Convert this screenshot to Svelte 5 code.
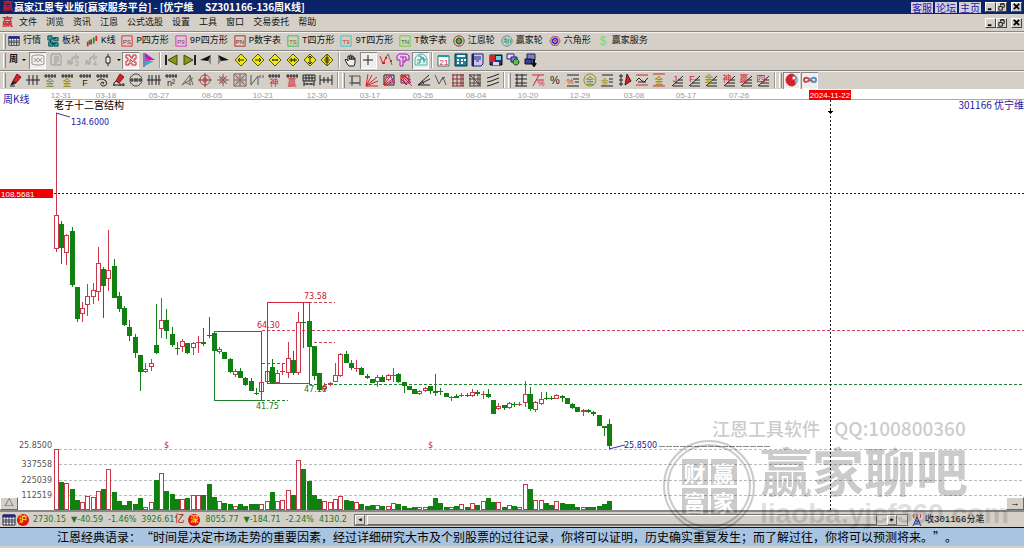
<script>
  const menus = ['文件', '浏览', '资讯', '江恩', '公式选股', '设置', '工具', '窗口', '交易委托', '帮助'];

  // icon shapes: [path, stroke, fill, width] or { t, x, y, s, c } for a letter
  const K = '#222';
  const R = '#d8202a';
  const G = '#999';
  const O = '#8a8a10';
  const ticks = ['M1 3H13M3 1V5M6 1V5M9 1V5M12 1V5', K];
  const fan = ['M2 13L13 3M3 13H13M5 10H13M8 7H13', K];
  const glyph = (t, c, x = 7, y = 13, s = 9) => ({ t, c, x, y, s });
  const ray = 'M1 13L3 1M1 13L7 2M1 13L12 4M1 13L13 8M1 13H13';
  const frame = (c) => ['M1 1H13V13H1Z', c];
  const diamond = ['M7 1L13 7L7 13L1 7Z', '#55551a', '#f0e810'];
  const grid = 'M2 1V13M6 1V13M10 1V13M1 2H13M1 6H13M1 10H13M12 1V13M1 13H13';
  const pen = ['M4 8L8 1L12 4L7 10Z', '#801010', R];
  const nib = ['M4 8L2 12L7 10M1 13H6', K, K];

  const modules = [
    { name: '行情', icon: [['M1 2H13V12H1Z', '#223', '#fff'], ['M1 2H13V4H1Z', '#22288a', '#22288a'], ['M1 7H13M1 9H13M4 4V12M7 4V12M10 4V12', '#334']] },
    { name: '板块', icon: [['M1 1H6V6H1ZM8 3H13V7H8ZM2 8H7V13H2ZM8 9H13V13H8Z', '#064848', '#20a8a8'], ['M6 4H10M5 10H10M4 5V9', K]] },
    { name: 'K线', icon: [['M2 8V13M6 5V11M12 1V7', R, 'none', 2], ['M4 6V11M9 3V10', '#109020', 'none', 2]] },
    { name: 'P四方形', icon: [frame(R), glyph('PS', '#a02020', 7, 10, 7)] },
    { name: '9P四方形', icon: [frame('#e020c0'), glyph('P9', '#a010a0', 7, 10, 7)] },
    { name: 'P数字表', icon: [frame('#a02020'), glyph('PN', '#701010', 7, 10, 7)] },
    { name: 'T四方形', icon: [frame('#20c040'), glyph('TS', '#a05010', 7, 10, 7)] },
    { name: '9T四方形', icon: [frame('#20c8c8'), glyph('T9', R, 7, 10, 7)] },
    { name: 'T数字表', icon: [frame('#60d020'), glyph('TN', '#107030', 7, 10, 7)] },
    { name: '江恩轮', icon: [['M7 1A6 6 0 1 1 6.9 1Z', '#701818'], ['M7 4A3 3 0 1 1 6.9 4Z', '#107010', 'none', 2], ['M7 6A1 1 0 1 1 6.9 6Z', R]] },
    { name: '赢家轮', icon: [['M7 1A6 6 0 1 1 6.9 1Z', '#4080a0'], ['M3 5H7V11M5 3V9M9 4V10M11 5V9M3 8H7', '#20a080']] },
    { name: '六角形', icon: [['M4 2H10L13 7L10 12H4L1 7Z', '#c03040'], ['M7 4A3 3 0 1 1 6.9 4Z', '#3030e0', 'none', 2], ['M7 6A1 1 0 1 1 6.9 6Z', R]] },
    { name: '赢家服务', icon: [glyph('$', '#78d878', 7, 12, 14)] }
  ];

  const viewTools = [
    { name: '网格', on: true, icon: [['M1 3L5 2H9L13 3V11L9 12H5L1 11ZM3 5L7 9L11 5M3 9L7 5L11 9', G]] },
    { name: '列表', icon: [['M3 1H11L12 3V12H4L2 11V3ZM5 4H10M5 6H10M5 8H10M5 10H8', G]] },
    { name: '分时二', icon: [['M1 12V8H3V11H5V5H7V3', G], ['M9 7V1M11 6V3', G], glyph('2', G, 10, 13, 7)] },
    { name: '分时四', icon: [['M1 12V8H3V11H5V5H7V3', G], ['M9 7V1M11 6V3', G], glyph('4', G, 10, 13, 7)] },
    { name: '蜡烛', drop: true, icon: [['M7 1V13', K], ['M5 4H9V10H5Z', K, '#eee']] },
    { name: '迷宫', on: true, icon: [['M2 2H6V4H9V2H12V6H10V9H12V12H8V10H5V12H2V8H4V5H2ZM6 6L9 9M5 8H7M9 5H7', R]] },
    { name: '旗', icon: [['M3 0L13 7H3Z', 'none', '#b020c0'], ['M3 4L9 8H3Z', 'none', '#f030b0'], ['M3 8H12L3 13Z', 'none', '#20b8c8'], ['M2 0V14', '#2030a0']] }
  ];

  const moveTools = [
    { name: '首根', icon: [['M1 2V12', K, 'none', 2], ['M12 2V12L3 7Z', '#444810', '#8a9818']] },
    { name: '末根', icon: [['M13 2V12', K, 'none', 2], ['M2 2V12L11 7Z', '#444810', '#8a9818']] },
    { name: '左移', icon: [['M12 2V12L9 8Z', 'none', '#888'], ['M1 7L12 2L9 8Z', 'none', '#111']] },
    { name: '右移', icon: [['M2 2V12L5 8Z', 'none', '#888'], ['M13 7L2 2L5 8Z', 'none', '#111']] },
    { name: '向左', icon: [diamond, ['M4 7H10M6 5L4 7L6 9', K]] },
    { name: '向右', icon: [diamond, ['M4 7H10M8 5L10 7L8 9', K]] },
    { name: '横向放大', icon: [diamond, ['M4 7H10M5 6V8M9 6V8', K]] },
    { name: '横向缩小', icon: [diamond, ['M3 7H11M5 5L6 7L5 9M9 5L8 7L9 9', K]] },
    { name: '纵向放大', icon: [diamond, ['M7 3V11M5 5L7 3L9 5M5 9L7 11L9 9', K]] },
    { name: '纵向缩小', icon: [diamond, ['M7 2V12M4 7H10M5 5H9M5 9H9', K]] }
  ];

  const cursorTools = [
    { name: '拖动', icon: [['M4 12L1 7L2 6L4 8V3H5L6 7V2H7L8 7V3H9L10 7V5H11V10L10 13H5Z', K, '#eee']] },
    { name: '十字', on: true, icon: [['M7 2V12M2 7H12', K]] },
    { name: '波浪', icon: [['M1 3L4 11L7 4', R], ['M7 4L9 1L13 12', '#806060'], ['M3 10H6M6 5H8M11 8H13', R, 'none', 2]] },
    { name: '形态', icon: [['M3 1H11L13 3V7H9V9H7V13H4V7H1V3Z', '#a020b0', '#ecc8ee'], ['M4 4H10M7 4V9M10 4V7', '#a020b0']] },
    { name: '江恩圆', on: true, icon: [['M4 3H7V7H3M7 5H10V10M3 10H6V7M9 4V7H12', '#20a098'], ['M7 1A6 6 0 0 1 13 7V12H1V7A6 6 0 0 1 7 1Z', '#40b8b0']] }
  ];

  const systemTools = [
    { name: '日历', icon: [['M1 3H12V13H1Z', '#208080', '#fff'], ['M1 3H12', '#20a0a0', 'none', 2], glyph('21', R, 7, 12, 8)] },
    { name: '计算器', icon: [['M1 1H13V13H1Z', '#003848', '#208098'], ['M3 3H11', '#d8ffff', 'none', 2], ['M3 7H5M7 7H9M3 10H5M7 10H9M10 7H12', '#fff', 'none', 2]] },
    { name: '笔记', icon: [['M1 1H12V11L10 13H1Z', '#202070', '#c8c8f0'], ['M3 4H10M3 6H10M5 8H8', '#202070'], ['M2 1V13', '#202070', 'none', 2]] },
    { name: '保存', icon: [['M1 2H13V12H1Z', '#111', '#1830a0'], ['M1 2H6V9H1Z', 'none', R], ['M7 3H12V7H7Z', 'none', '#60d8d8'], ['M4 9H10V12H4Z', 'none', '#ddd']] },
    { name: '联网', icon: [['M1 1H8V6H1Z', '#202070', '#e0e0ff'], ['M5 4H11V9H5Z', '#202070', '#8080d0'], ['M10 6A3 3 0 1 1 9.9 6Z', '#104010', '#60c040']] },
    { name: '传送', icon: [['M4 1H12V7H4Z', '#202050', '#8080c0'], ['M2 6H9V11H2Z', '#111', '#3040a0'], ['M11 6V13M9 10L11 13L13 10', '#111', 'none', 2]] }
  ];

  const lineTools = [
    { name: '画笔', icon: [pen, nib] },
    { name: '周期线', icon: [['M0 7H14M3 2V12M7 2V12M11 2V12', K]] },
    { name: '金周期', icon: [ticks, glyph('金', O)] },
    { name: '金分割', icon: [ticks, glyph('金', O)] },
    { name: '费氏', icon: [ticks, glyph('F', K)] },
    { name: '螺旋', icon: [ticks, ['M2 8Q6 4 11 8Q13 13 8 13Q4 12 7 9Q10 9 8 11', K]] },
    { name: '时间笔', icon: [pen, ['M4 8L2 10M1 12H13M2 10V13M8 10V13M11 10V13', K]] },
    { name: '圆周', icon: [['M7 1A6 6 0 1 1 6.9 1Z', '#444'], ['M1 7H13M3 5V9M6 5V9M8 5V9M11 5V9', K]] },
    { name: '等分', icon: [['M0 7H14M2 2V12M5 2V12M9 2V12M12 2V12', K]] },
    { name: '平方', icon: [ticks, glyph('n²', K)] },
    { name: '角度', icon: [['M1 12L9 2L12 12M1 12L12 5M9 2V12M4 9L10 12', '#666']] },
    { name: '太极', icon: [['M7 2A5 5 0 1 1 6.9 2Z', R], ['M0 7H14M7 0V14', '#555'], ['M7 5A2 2 0 1 1 6.9 5Z', R]] },
    { name: '放射', icon: [['M7 1V13M1 7H13M3 3L11 11M11 3L3 11', '#a05050'], ['M7 4A3 3 0 1 1 6.9 4Z', '#777']] },
    { name: '网状', icon: [['M1 1H13V13H1ZM1 1L13 13M13 1L1 13M7 1V13M1 7H13', '#886060'], ['M4 4H10V10H4Z', '#888']] },
    { name: '波段', icon: [['M1 2V12M1 12L8 3V12M10 2V5M13 2V5', '#555']] },
    { name: '神线', icon: [ticks, glyph('神', R)] },
    { name: '赢线', icon: [ticks, glyph('赢', R)] },
    { name: '日网', icon: [['M1 2H13V8H1ZM4 2V8M7 2V8M10 2V8M1 5H13M2 8V13M12 8V13M2 11H12M5 10V12M9 10V12', K]] },
    { name: '区间', icon: [['M1 2V12M13 2V12M1 7H13M5 4V10M9 4V10', K]] }
  ];

  const fanTools = [
    { name: '方框', icon: [['M4 3H12V10H4ZM1 3H4M1 10H12M4 3V13M12 10V13', '#555']] },
    { name: '扇形', icon: [[ray, R]] },
    { name: '方扇', icon: [['M2 2H12V12H2Z', K], ['M2 12L5 1M2 12L9 2M2 12L12 5M2 12L13 9', R], ['M4 5L9 3L11 8L7 10', '#8020b0']] },
    { name: '内方扇', icon: [['M2 2H10V10H2Z', '#802020', '#e0b0b0'], ['M2 2L13 13M2 2L12 7M2 2L7 12', R], ['M5 2L12 10M2 6L8 12', '#602080']] },
    { name: '角度扇', icon: [['M1 12L12 2M1 12L13 6M1 12L13 12M5 8L7 11', K]] },
    { name: '折线', icon: [['M1 2L5 11L9 4L12 12M7 7L11 4', '#555']] },
    { name: '红格', icon: [[grid, '#803030']] },
    { name: '黑格', icon: [[grid, '#504040'], ['M2 2L12 12', '#803030']] },
    { name: '平行线', icon: [['M1 5L5 4L13 1M1 9L5 8L13 5M1 13L5 12L13 9', K]] }
  ];

  const ratioTools = [
    { name: '阶梯', icon: [['M3 1V13M1 2H13M1 6H13M1 10H13M8 1V13M1 13H13', K]] },
    { name: '七分比', icon: [['M1 2H13M2 13L8 2M5 7H13', R], glyph('%', R, 10, 13, 8)] },
    { name: '百分比', icon: [glyph('%', K, 7, 11, 11)] },
    { name: '百分线', icon: [['M1 2H13M7 6H13M9 9H13M1 13H13', K], glyph('%', R, 4, 11, 8)] },
    { name: '金圆', icon: [['M7 1A6 6 0 1 1 6.9 1Z', O], glyph('金', O, 7, 11)] },
    { name: '金线', icon: [['M2 2H13M9 6H13M9 9H13M1 13H13', K], glyph('金', O, 5, 12, 8)] },
    { name: '价位笔', icon: [['M3 1V13M1 3H5M1 7H5M1 11H5', K], ['M7 12L9 1L13 8Z', '#601010', R]] },
    { name: '波动线', icon: [['M1 2H13M1 12H13', R], ['M1 8L4 5L7 8L9 9L13 5M3 9H11', K]] },
    { name: '金红线', icon: [['M1 1H13M1 13H13', R], glyph('金', O, 7, 11)] },
    ...[['J', R], ['F', R], ['金', O], ['神', R], ['赢', R], ['四', R]].map(([t, c]) => ({
      name: t + '线',
      icon: [fan, glyph(t, c, 5, 9, 9)]
    }))
  ];

  const taoTools = [
    { name: '太极图', on: true, icon: [['M7 1A6 6 0 1 1 6.9 1Z', 'none', '#80b8e8'], ['M7 1A6 6 0 0 0 7 13A3 3 0 0 0 7 7A3 3 0 0 1 9 2Z', R, R], ['M9 3A2 2 0 1 1 8.9 3Z', R, '#fff']] },
    { name: '无穷', on: true, icon: [['M7 7C5 4 1 4 1 7C1 10 4 9 7 7L10 9', '#c04858', 'none', 2], ['M7 7C9 4 13 4 13 7C13 10 10 9 9 8', '#5090d0', 'none', 2]] }
  ];

  const dates = [
    ['12-31', 61], ['03-18', 106], ['05-27', 159], ['08-05', 212], ['10-21', 263],
    ['12-30', 317], ['03-17', 370], ['05-26', 423], ['08-04', 476], ['10-20', 528],
    ['12-29', 580], ['03-08', 634], ['05-17', 686], ['07-26', 739]
  ];

  // up?, body top, body bottom, high, low, volume top
  const bars = [
    [1, 215, 249, 113, 252, 449], [0, 224, 248, 221, 264, 482], [1, 235, 253, 234, 265, 483], [0, 231, 285, 227, 287, 489],
    [0, 287, 319, 287, 322, 500], [1, 308, 314, 302, 322, 502], [1, 296, 305, 284, 316, 496], [1, 290, 297, 283, 304, 497],
    [1, 263, 292, 247, 301, 491], [0, 269, 286, 267, 318, 489], [1, 270, 279, 230, 291, 469], [0, 266, 298, 259, 298, 492],
    [0, 296, 309, 292, 312, 501], [0, 308, 325, 306, 326, 505], [0, 327, 336, 320, 341, 501], [0, 337, 353, 334, 358, 504],
    [0, 355, 372, 355, 391, 498], [1, 369, 372, 363, 373, 507], [1, 363, 367, 359, 371, 502], [0, 345, 353, 304, 354, 480],
    [1, 320, 329, 298, 338, 473], [0, 320, 331, 309, 339, 491], [0, 334, 345, 327, 347, 494], [0, 348, 349, 342, 355, 499],
    [1, 341, 347, 339, 352, 499], [0, 343, 353, 343, 354, 498], [1, 343, 348, 342, 355, 495], [1, 342, 343, 336, 353, 495],
    [0, 342, 344, 328, 346, 495], [0, 335, 336, 317, 338, 484], [0, 333, 351, 331, 351, 497], [1, 349, 352, 347, 354, 501],
    [0, 352, 359, 352, 359, 503], [0, 359, 372, 358, 373, 504], [1, 371, 375, 369, 377, 506], [0, 371, 378, 368, 378, 504],
    [0, 378, 385, 377, 386, 506], [0, 381, 391, 378, 391, 504], [0, 393, 394, 388, 395, 504], [1, 382, 392, 382, 400, 504],
    [1, 371, 382, 371, 382, 501], [0, 367, 383, 359, 383, 492], [1, 373, 383, 370, 383, 501], [1, 371, 372, 363, 375, 500],
    [1, 358, 373, 342, 378, 490], [0, 360, 373, 351, 375, 495], [1, 322, 373, 312, 375, 460], [0, 322, 323, 302, 348, 469],
    [0, 321, 347, 320, 347, 481], [0, 346, 376, 346, 380, 495], [0, 373, 390, 373, 391, 499], [1, 386, 389, 383, 391, 501],
    [1, 383, 385, 382, 386, 502], [1, 375, 382, 363, 382, 499], [1, 354, 376, 353, 377, 496], [0, 354, 363, 351, 363, 500],
    [0, 363, 368, 360, 370, 501], [1, 368, 369, 360, 372, 502], [0, 368, 375, 367, 375, 504], [0, 376, 378, 374, 379, 506],
    [0, 379, 383, 379, 383, 505], [1, 377, 382, 375, 387, 505], [0, 377, 382, 375, 382, 506], [1, 375, 380, 374, 381, 506],
    [1, 375, 376, 368, 382, 503], [0, 374, 382, 373, 383, 504], [0, 382, 386, 382, 393, 506], [0, 386, 390, 386, 390, 508],
    [0, 389, 394, 389, 394, 507], [1, 391, 394, 390, 395, 507], [1, 388, 391, 387, 392, 507], [0, 386, 391, 386, 394, 506],
    [0, 391, 393, 374, 396, 498], [0, 391, 392, 388, 395, 503], [0, 393, 397, 393, 397, 507], [1, 397, 398, 396, 401, 507],
    [0, 396, 398, 394, 398, 506], [1, 395, 396, 393, 397, 504], [0, 395, 396, 393, 397, 507], [1, 392, 396, 389, 397, 503],
    [0, 392, 394, 390, 396, 505], [1, 394, 395, 391, 399, 501], [0, 394, 397, 389, 398, 498], [0, 400, 414, 400, 414, 502],
    [1, 406, 409, 403, 410, 502], [0, 405, 408, 405, 410, 507], [1, 403, 408, 402, 409, 505], [0, 404, 405, 402, 407, 506],
    [1, 404, 405, 402, 406, 507], [1, 394, 403, 381, 407, 484], [0, 394, 409, 387, 411, 489], [1, 402, 410, 401, 412, 500],
    [1, 399, 404, 392, 405, 500], [0, 398, 399, 392, 400, 503], [0, 398, 399, 396, 400, 505], [1, 395, 399, 394, 399, 501],
    [0, 396, 398, 395, 402, 503], [0, 398, 404, 398, 404, 504], [0, 404, 408, 403, 409, 504], [0, 407, 412, 407, 412, 507],
    [1, 410, 412, 409, 416, 507], [0, 410, 412, 409, 413, 507], [0, 412, 414, 411, 416, 507], [0, 415, 426, 415, 426, 506],
    [0, 426, 428, 426, 436, 504], [0, 424, 446, 419, 449, 501]
  ].map(([up, top, bottom, high, low, volume], i) => ({
    up, top, bottom, high, low, volume,
    x: Math.round(55.7 + i * 5.27)
  }));
</script>

{#snippet art(shapes)}
  <svg class="icon" viewBox="0 0 14 14" aria-hidden="true">
    {#each shapes as s}
      {#if s.t}
        <text x={s.x} y={s.y} font-size={s.s} fill={s.c} text-anchor="middle">{s.t}</text>
      {:else}
        <path d={s[0]} stroke={s[1]} fill={s[2] ?? 'none'} stroke-width={s[3] ?? 1} />
      {/if}
    {/each}
  </svg>
{/snippet}

{#snippet tools(list)}
  {#each list as tool}
    <button class="tool" class:on={tool.on} aria-label={tool.name}>
      {@render art(tool.icon)}
      {#if tool.drop}<i class="drop"></i>{/if}
    </button>
  {/each}
{/snippet}

{#snippet windowButtons()}
  <div class="window-buttons">
    <button aria-label="最小化"><svg viewBox="0 0 10 9"><path d="M2 7H6" stroke-width="2" /></svg></button>
    <button aria-label="还原"><svg viewBox="0 0 10 9"><path d="M4 3V1H8V5H7M2 4H6V8H2ZM4 1H8" /></svg></button>
    <button class="close" aria-label="关闭"><svg viewBox="0 0 10 9"><path d="M2 1L8 7M8 1L2 7" stroke-width="2" /></svg></button>
  </div>
{/snippet}

<div class="app">
  <header class="title">
    <span class="logo">赢</span>
    <h1>赢家江恩专业版[赢家服务平台] - [优宁维&nbsp;&nbsp;&nbsp;&nbsp;&nbsp;SZ301166-136周K线]</h1>
    <nav class="links">
      <a href="#service">客服</a>
      <a href="#forum">论坛</a>
      <a href="#home">主页</a>
    </nav>
    {@render windowButtons()}
  </header>

  <nav class="menu">
    <span class="logo">赢</span>
    {#each menus as name}
      <button>{name}</button>
    {/each}
    {@render windowButtons()}
  </nav>

  <div class="bar modules">
    <i class="grip"></i>
    {#each modules as m}
      <button class="module">{@render art(m.icon)}{m.name}</button>
    {/each}
  </div>

  <div class="bar tall">
    <i class="grip"></i>
    <button class="period">周<i class="drop"></i></button>
    <div class="group view">{@render tools(viewTools)}</div>
    <i class="sep"></i>
    <div class="group move">{@render tools(moveTools)}</div>
    <i class="sep"></i>
    <div class="group cursor">{@render tools(cursorTools)}</div>
    <i class="sep"></i>
    <div class="group system">{@render tools(systemTools)}</div>
  </div>

  <div class="bar">
    <i class="grip"></i>
    <div class="group line">{@render tools(lineTools)}</div>
    <i class="sep"></i><i class="grip"></i>
    <div class="group fans">{@render tools(fanTools)}</div>
    <i class="sep"></i><i class="grip"></i>
    <div class="group ratio">{@render tools(ratioTools)}</div>
    <i class="sep"></i><i class="grip"></i>
    <div class="group tao">{@render tools(taoTools)}</div>
  </div>

  <main class="chart">
    <svg class="plot">
      <g transform="translate(0 -89)" shape-rendering="crispEdges">
        <line x1="54" x2="100%" y1="99.5" y2="99.5" stroke="#aaa" />
        {#each [449, 464, 480, 495] as y}
          <line x1="54" x2="100%" y1={y + 0.5} y2={y + 0.5} class="dash" stroke="#bbb" />
        {/each}
        <line x1="262" x2="100%" y1="330.5" y2="330.5" class="dash" stroke="#d04058" />
        <line x1="309" x2="100%" y1="384.5" y2="384.5" class="dash" stroke="#208030" />
        <path d="M309 302.5H335M309 342.5H335" class="dash" stroke="#d04058" />
        <path d="M262 363.5H286M262 400.5H288" class="dash" stroke="#208030" />
        <path d="M659 446.5H770" stroke="#888" stroke-dasharray="6 1" />

        {#each bars as b}
          <g class={b.up ? 'up' : 'down'}>
            {#if b.high < b.top}<line x1={b.x + 0.5} x2={b.x + 0.5} y1={b.high} y2={b.top} />{/if}
            {#if b.low > b.bottom}<line x1={b.x + 0.5} x2={b.x + 0.5} y1={b.bottom} y2={b.low} />{/if}
            {#if b.bottom - b.top < 2}
              <line x1={b.x - 2} x2={b.x + 3} y1={b.top + 0.5} y2={b.top + 0.5} />
            {:else}
              <rect x={b.x - 1.5} y={b.top + 0.5} width="4" height={b.bottom - b.top - 1} />
            {/if}
            <rect x={b.x - 1.5} y={b.volume + 0.5} width="4" height={509 - b.volume} />
          </g>
        {/each}

        <rect x="214.5" y="331.5" width="47" height="69" fill="none" stroke="#208030" />
        <rect x="267.5" y="302.5" width="42" height="81" fill="none" stroke="#d02838" />

        <line x1="54" x2="100%" y1="193.5" y2="193.5" class="cross" />
        <line x1="830.5" x2="830.5" y1="100" y2="510" class="cross" />
        <path d="M828 111.5H833M829 112.5H832M830.5 109V114" stroke="#000" />
        <rect x="0" y="189" width="53" height="9" fill="#f00000" />
        <rect x="809" y="90" width="42" height="10" fill="#f00000" />
      </g>
      <g transform="translate(0 -89)">
        <path d="M56 113L70 117M609 449L625 445" stroke="#3038a0" fill="none" />
        <g class="date">
          {#each dates as [label, x]}
            <text {x} y="98" text-anchor="middle">{label}</text>
          {/each}
        </g>
        <text x="830" y="98" class="mark" text-anchor="middle">2024-11-22</text>
        <text x="1" y="197" class="mark">108.5681</text>
        <text x="3" y="103" class="cn blue">周K线</text>
        <text x="54" y="109" class="cn">老子十二宫结构</text>
        <text x="100%" y="109" class="cn blue" text-anchor="end">301166 优宁维</text>
        <g class="num">
          <text x="71" y="125" class="blue">134.6000</text>
          <text x="624" y="448" class="blue">25.8500</text>
          <text x="304" y="299" class="red">73.58</text>
          <text x="257" y="328" class="red">64.30</text>
          <text x="256" y="409" class="green">41.75</text>
          <text x="304" y="392" class="green">47.18</text>
          <text x="164" y="448" class="red">$</text>
          <text x="428" y="448" class="red">$</text>
          <g class="scale" text-anchor="end">
            <text x="52" y="448">25.8500</text>
            <text x="52" y="467">337558</text>
            <text x="52" y="483">225039</text>
            <text x="52" y="498">112519</text>
          </g>
        </g>
      </g>
    </svg>
    <button class="corner left" aria-label="展开">△</button>
    <button class="corner right" aria-label="向右">→</button>
  </main>

  <footer class="status">
    <div class="market">
      {@render art(modules[0].icon)}
      <b class="badge">沪</b>
      <span>2730.15</span><span>▼-40.59</span><span>-1.46%</span><span>3926.61<em>亿</em></span>
      <b class="badge">深</b>
      <span>8055.77</span><span>▼-184.71</span><span>-2.24%</span><span>4130.2</span>
    </div>
    <div class="scroll">
      <button aria-label="向左滚动">◂</button>
      <div class="thumb"></div>
      <button aria-label="向右滚动">▸</button>
    </div>
    <div class="feed">
      <svg class="icon" viewBox="0 0 14 14" aria-hidden="true">
        <path d="M3 13L7 4L11 13M4 11H10M5 8H9M5 11L9 8" stroke="#2838a0" fill="none" />
        <path d="M4 1Q2 3 4 5M10 1Q12 3 10 5M7 1V5" stroke={R} fill="none" />
      </svg>
      收301166分笔
    </div>
  </footer>

  <p class="quote">江恩经典语录：“时间是决定市场走势的重要因素，经过详细研究大市及个别股票的过往记录，你将可以证明，历史确实重复发生；而了解过往，你将可以预测将来。”。</p>

  <div class="watermark" aria-hidden="true">
    <div class="contact">江恩工具软件 <span>QQ:100800360</span></div>
    <div class="brand">
      <div class="seal"><span>财</span><span>赢</span><span>富</span><span>家</span></div>
      <div>
        <div class="name">赢家聊吧</div>
        <div class="site">liaoba.yjcf360.com</div>
      </div>
    </div>
  </div>
</div>

<style>
  :global(body) {
    background: #d4d0c8;
  }
  .app {
    position: relative;
    overflow: hidden;
    font: 9px/12px "Liberation Mono", "Noto Sans CJK SC", monospace;
    color: #111;
    background: #d4d0c8;
  }
  button {
    margin: 0;
    padding: 0;
    border: 0;
    background: none;
    font: inherit;
    color: inherit;
    white-space: nowrap;
  }
  .icon {
    flex: none;
    width: 14px;
    height: 14px;
    font-family: "Liberation Sans", "Noto Sans CJK SC", sans-serif;
  }

  /* title and menu */
  .title {
    display: flex;
    align-items: center;
    height: 14px;
    padding: 0 2px;
    background: #0a246a;
    color: #fff;
  }
  .logo {
    width: 12px;
    font-size: 11px;
    font-weight: bold;
    color: #d01828;
  }
  h1 {
    flex: 1;
    margin: 0;
    font: bold 10px/12px "Noto Sans CJK SC", sans-serif;
    white-space: nowrap;
  }
  .links {
    display: flex;
    gap: 2px;
    margin-right: 4px;
  }
  .links a {
    width: 22px;
    font: 10px/11px "Noto Sans CJK SC", sans-serif;
    text-align: center;
    text-decoration: none;
    color: #1818b0;
    background: #d4d0d8;
  }
  .window-buttons {
    display: flex;
  }
  .window-buttons button {
    display: flex;
    width: 11px;
    height: 10px;
    border: 1px solid;
    border-color: #fff #444 #444 #fff;
    box-sizing: border-box;
    background: #d4d0c8;
  }
  .window-buttons .close {
    margin-left: 4px;
  }
  .window-buttons svg {
    width: 9px;
    height: 8px;
    fill: none;
    stroke: #000;
  }
  .menu {
    display: flex;
    align-items: center;
    gap: 9px;
    height: 17px;
    padding: 0 2px;
  }
  .menu .logo {
    margin-right: -4px;
  }
  .menu .window-buttons {
    margin-left: auto;
  }

  /* toolbars */
  .bar {
    display: flex;
    align-items: center;
    height: 19px;
    padding-left: 2px;
    box-sizing: border-box;
    border-top: 1px solid #888;
    box-shadow: inset 0 1px #f4f2ee;
  }
  .tall {
    height: 20px;
    padding-bottom: 1px;
  }
  .modules {
    gap: 6px;
  }
  .modules .grip {
    margin-right: -4px;
  }
  .module {
    display: flex;
    align-items: center;
    gap: 3px;
  }
  .module .icon {
    width: 12px;
    height: 12px;
  }
  .grip {
    flex: none;
    width: 1px;
    height: 15px;
    margin: 0 1px;
    border-left: 1px solid #fff;
    border-right: 1px solid #888;
  }
  .sep {
    flex: none;
    width: 1px;
    height: 16px;
    margin: 0 2px;
    background: #999;
    border-right: 1px solid #fff;
  }
  .group {
    display: flex;
    justify-content: space-between;
  }
  .view { width: 128px; }
  .move { width: 173px; }
  .cursor { width: 87px; }
  .system { width: 104px; }
  .line { width: 328px; }
  .fans { width: 155px; }
  .ratio { width: 260px; }
  .tao { width: 35px; }
  .tool {
    display: flex;
    align-items: center;
    justify-content: center;
    gap: 2px;
    min-width: 17px;
    height: 17px;
  }
  .tool.on {
    background: #f0eeea;
    box-shadow: inset 1px 1px #888, inset -1px -1px #fff;
  }
  .drop {
    width: 0;
    height: 0;
    border: 2px solid transparent;
    border-top-color: #000;
    border-bottom: 0;
  }
  .period {
    display: flex;
    align-items: center;
    gap: 4px;
    width: 22px;
    padding-left: 2px;
    font-weight: bold;
  }

  /* chart */
  .chart {
    position: relative;
    background: #fff;
    border-bottom: 2px solid #888;
  }
  .plot {
    display: block;
    width: 100%;
    height: 421px;
  }
  .dash {
    stroke-dasharray: 3 2;
  }
  .cross {
    stroke: #222;
    stroke-dasharray: 2 2;
  }
  .up {
    stroke: #c83848;
    fill: #fff;
  }
  .down {
    stroke: #108010;
    fill: #108010;
  }
  .date,
  .mark {
    font: 8px "Liberation Sans", sans-serif;
    fill: #999;
  }
  .mark {
    fill: #fff;
  }
  .cn {
    font: 10px "Noto Sans CJK SC", sans-serif;
  }
  .num {
    font: 8px "DejaVu Sans", sans-serif;
  }
  .blue { fill: #1818a0; }
  .red { fill: #c82030; }
  .green { fill: #207820; }
  .scale { fill: #555; }
  .corner {
    position: absolute;
    bottom: 0;
    width: 18px;
    height: 13px;
    line-height: 10px;
    color: #000;
    background: #d4d0c8;
    border: 1px solid;
    border-color: #fff #666 #666 #fff;
  }
  .corner.left { left: 0; }
  .corner.right { right: 0; }

  /* status */
  .status {
    display: grid;
    grid-template-columns: 354px 1fr 116px;
    align-items: center;
    height: 15px;
    border-bottom: 1px solid #111;
  }
  .market {
    display: flex;
    align-items: center;
    gap: 4px;
    padding-left: 2px;
    overflow: hidden;
    white-space: nowrap;
    font: 8px/12px "DejaVu Sans", "Noto Sans CJK SC", sans-serif;
    color: #207820;
  }
  .market span:nth-of-type(n + 2) {
    padding-left: 1px;
  }
  .market em {
    font-style: normal;
    font-size: 10px;
    color: #a02020;
  }
  .market .icon {
    margin-right: -3px;
  }
  .badge {
    flex: none;
    width: 12px;
    height: 12px;
    border-radius: 50%;
    background: #e01010;
    color: #ffe020;
    text-align: center;
  }
  .scroll {
    display: flex;
    gap: 2px;
    padding-right: 10px;
    border: 1px solid #777;
  }
  .scroll button,
  .thumb {
    width: 10px;
    height: 10px;
    box-sizing: border-box;
    border: 1px solid;
    border-color: #fff #666 #666 #fff;
    line-height: 8px;
  }
  .thumb {
    flex: 1;
    margin-right: 8px;
  }
  .feed {
    display: flex;
    align-items: center;
    gap: 1px;
    padding-left: 2px;
  }
  .quote {
    margin: 0;
    height: 18px;
    padding-left: 57px;
    overflow: hidden;
    white-space: nowrap;
    font: 12px/18px "Noto Sans CJK SC", sans-serif;
    text-spacing-trim: space-all;
    color: #000;
    background: #a9c4e0;
    border-bottom: 2px solid #d4d0c8;
  }

  /* watermark over the lower right of the chart */
  .watermark {
    position: absolute;
    right: 13px;
    bottom: 16px;
    width: 348px;
    font-family: "Noto Sans CJK SC", sans-serif;
    color: #000;
    opacity: 0.2;
    pointer-events: none;
  }
  .contact {
    display: flex;
    gap: 14px;
    padding-left: 49px;
    font: 500 18px/24px "Noto Sans CJK SC", sans-serif;
    white-space: nowrap;
  }
  .contact span {
    font-size: 19px;
  }
  .brand {
    display: flex;
    gap: 5px;
  }
  .seal {
    display: grid;
    grid-template-columns: 26px 26px;
    place-content: center;
    gap: 3px;
    width: 80px;
    height: 80px;
    border: 6px double #000;
    border-radius: 50%;
  }
  .seal span {
    font: bold 22px/26px "Noto Sans CJK SC", sans-serif;
    text-align: center;
    color: #fff;
    background: #000;
  }
  .name {
    font: bold 52px/60px "Noto Sans CJK SC", sans-serif;
  }
  .site {
    font: bold 28px/28px "Liberation Sans", sans-serif;
    opacity: 0.6;
  }
</style>
